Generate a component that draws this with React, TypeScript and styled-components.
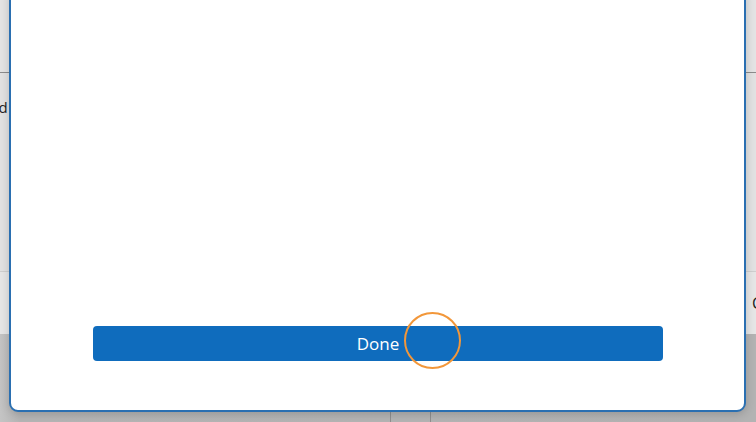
import styled, { createGlobalStyle } from "styled-components";

const GlobalStyle = createGlobalStyle`
  html, body {
    margin: 0;
    padding: 0;
    width: 756px;
    height: 422px;
    overflow: hidden;
    font-family: "Open Sans", "Noto Sans", sans-serif;
  }
`;

const Screen = styled.div`
  position: relative;
  width: 756px;
  height: 422px;
  overflow: hidden;
  display: flex;
  flex-direction: column;
  background: #e2e2e2;
`;

const Header = styled.div`
  height: 72px;
  border-bottom: 1px solid #8c8c8c;
  background: #e4e4e4;
  flex-shrink: 0;
`;

const Content = styled.div`
  flex: 1;
  display: flex;
  justify-content: space-between;
  padding: 24px 0 0;
  color: #222;
  font-size: 15px;
`;

const EdgeText = styled.span`
  margin-left: -10px;
`;

const Toolbar = styled.div`
  height: 62px;
  flex-shrink: 0;
  border-top: 1px solid #cfcfcf;
  display: flex;
  align-items: center;
  justify-content: flex-end;
  background: #e6e6e6;
  font-size: 16px;
  color: #222;
`;

const ToolbarText = styled.span`
  margin-right: -6px;
`;

const Footer = styled.div`
  height: 88px;
  flex-shrink: 0;
  display: grid;
  grid-template-columns: 390px 40px 1fr;
  background: linear-gradient(90deg, #c4c4c4 0px, #b5b5b5 20px, #b3b3b3 100%);
`;

const FooterCell = styled.div<{ $divider?: boolean }>`
  border-left: ${({ $divider }) => ($divider ? "1px solid #8f8f8f" : "none")};
`;

const Dialog = styled.div`
  position: absolute;
  left: 9px;
  top: -12px;
  width: 737px;
  height: 424px;
  box-sizing: border-box;
  border: 2px solid #2a6fb1;
  border-radius: 9px;
  background: #ffffff;
  display: flex;
  flex-direction: column;
  justify-content: flex-end;
  padding: 0 81px 49px 82px;
  box-shadow: 0 2px 10px rgba(0, 0, 0, 0.18);
`;

const DoneButton = styled.button`
  height: 35px;
  width: 100%;
  border: none;
  border-radius: 4px;
  background: #0f6cbd;
  color: #ffffff;
  font-family: "Open Sans", "Noto Sans", sans-serif;
  font-size: 17px;
  padding: 0 0 1px;
  cursor: pointer;
`;

const ClickRing = styled.div`
  position: absolute;
  left: 404px;
  top: 312px;
  width: 53px;
  height: 53px;
  border: 2px solid #f2973a;
  border-radius: 50%;
  pointer-events: none;
`;

export default function App() {
  return (
    <>
      <GlobalStyle />
      <Screen>
        <Header />
        <Content>
          <EdgeText>ed</EdgeText>
        </Content>
        <Toolbar>
          <ToolbarText>C</ToolbarText>
        </Toolbar>
        <Footer>
          <FooterCell />
          <FooterCell $divider />
          <FooterCell $divider />
        </Footer>
        <Dialog>
          <DoneButton>Done</DoneButton>
        </Dialog>
        <ClickRing />
      </Screen>
    </>
  );
}
